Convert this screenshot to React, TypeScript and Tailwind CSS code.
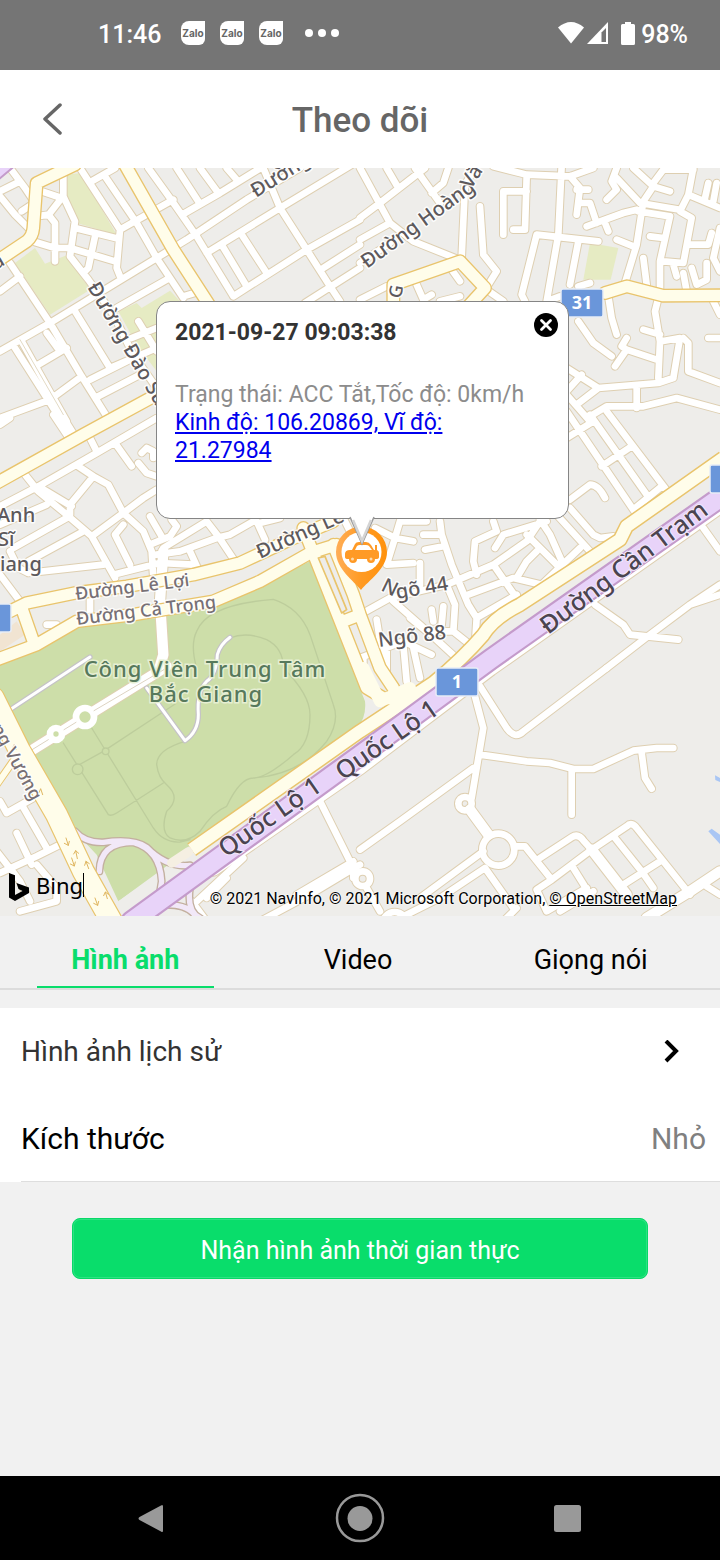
import React from "react";

type Tile = { x: number; y: number; roads: string };

/* Minor streets, one group of paths per section of the map. */
const streets: Tile[] = [
  {
    x: 0,
    y: 0,
    roads:
      "M240 0L360 185L350 300L362 330 M190 0V85L225 160L210 265L265 335L340 440L400 560L470 660 M110 65L185 90L150 135 M110 145L145 140L165 165V280 M105 222L165 240L210 240L345 280 M225 180L355 212 M285 205L265 300L250 315 M275 40L345 0 M315 25L410 165L470 270L550 390 M360 185L520 95 M445 0L510 90L590 205L700 385 M530 0L595 100 M600 0L655 75 M680 0L710 35 M550 138L660 75L790 -5 M0 550L150 465L470 270L560 215L740 95L900 0 M620 255L840 120L1080 -25 M790 0L840 120L920 245L990 355L1020 400 M700 385L920 245L1080 155 M970 300L1080 230 M915 405L1080 300 M665 230L740 355 M725 200L800 315 M550 385L600 370 M350 420L500 335 M225 430L330 600 M30 285L150 465L245 625L320 745 M0 370L60 325 M45 540L185 760 M65 520L160 690L200 760 M140 495L180 550 M200 540L115 590 M150 695L245 625 M270 635L400 570 M330 600L470 540 M295 685L430 615 M0 750L150 695 M415 460L470 550 M395 510L470 480 M0 85L45 140L85 180 M0 70L50 45 M30 0L75 60L95 90 M65 130L95 110",
  },
  {
    x: 1080,
    y: 0,
    roads:
      "M0 150L60 105L195 0 M0 215L90 165 M0 285L90 225 M0 0L90 165L160 220L285 270 M80 0L115 60 M165 0L240 105 M265 0L250 45L215 75 M345 0L315 50L305 270 M0 395L80 355 M170 350L190 395 M275 305L300 340 M380 365L430 400 M190 395L215 380 M240 400L300 385 M360 115L370 260L410 310L385 350 M430 200V70H500 M500 25L495 185H460 M400 -5L500 20L630 25L700 0 M605 -5L595 200 M715 220L530 200L485 380L495 400 M595 200L560 400L600 385 M655 220L630 350 M655 355L690 345 M630 25L660 60L650 140 M650 65H685 M655 105H690L710 165 M680 175L790 135L830 125 M735 165L745 190 M740 95L770 65L755 40L770 0 M770 30L840 105L960 125 M820 0L880 55L850 100L830 230L795 345 M880 55L930 70 M880 45L910 5H1000 M1000 0L985 80L960 130L995 150L970 285L910 280 M985 80L1080 120 M1045 45L1035 90 M1070 45L1060 100 M835 130L930 145L900 280V370 M870 205L910 210 M770 215L820 235 M990 230H1045L1055 195 M850 270L860 350 M940 290L950 325 M970 315L980 370 M995 300L1010 350L1040 335V285 M1080 180L1060 270L1080 310 M745 385L755 450L770 500 M655 460L700 525L755 565 M895 390L885 430L900 520L895 630 M905 520L960 510L940 630 M970 510L985 525V610L1080 645 M850 485L900 500 M800 510L785 535L800 545L890 575 M800 545L765 595 M1045 510H1080 M1060 400L1080 440 M620 600L715 660L895 645L940 630 M620 670L665 620 M715 660L650 710 M830 660V720 M620 680L690 760 M690 745L740 715L850 715L950 690L1080 725",
  },
  {
    x: 0,
    y: 750,
    roads:
      "M160 -10L210 65 M185 -10L225 55 M0 20L30 0 M265 50L290 100 M0 265L115 205L290 105L470 0 M75 170L115 220L200 290L275 355L345 480 M115 205L215 265 M235 145L280 175L210 260V290 M280 175L325 200L370 285L430 240L470 215 M345 75L395 145 M425 105L440 90L460 100V120 M415 135L440 165L470 175 M0 320L140 260 M40 390L200 300 M85 430L250 340 M275 355L370 285L430 340L455 400L460 480 M370 320L345 350L390 440 M85 465L310 440 M0 470L60 550 M30 400L55 450L85 465 M340 470L480 435L580 440 M450 295L485 355 M515 305L530 325L510 355L450 380 M470 410L540 400L650 360L690 350L760 310 M490 390L620 310L655 355L705 430 M570 400L595 455 M770 310L795 365 M780 315L840 300 M270 540V580 M140 620H170 M1030 300L1060 360",
  },
  {
    x: 1080,
    y: 750,
    roads:
      "M620 -20L830 290 M690 -10L860 230 M740 -20L930 230 M620 60L700 10 M725 145L815 85 M820 275L905 205 M630 245L690 200Q715 200 735 240 M630 270L700 350L720 360L760 355 M590 290L690 400 M540 305L570 350L610 440 M45 330L105 360L160 370 M105 360L80 440L160 435 M120 310L105 360 M120 310H200 M240 310L245 350H190 M245 350L275 440L325 560L350 600L345 680 M195 395L250 385 M180 435V500 M260 500L400 440L500 370L540 310 M400 310L410 340L345 370L340 430L350 470 M405 390L430 350L560 310 M500 350L590 440L620 460 M400 440L480 555 M325 530L460 480L545 500L660 390 M470 480L500 430L530 400 M350 600L470 530 M0 590L90 540L260 500L285 560L280 640 M100 550L180 620L300 730 M150 600L200 640L280 640L330 680 M250 565L245 620 M215 575L220 610 M50 605L70 730 M0 720L130 670L215 710 M80 670V770 M130 680L140 790 M160 690L180 780 M10 720V770 M1030 330L1080 400 M705 560L790 620L810 650L955 665 M740 750L870 650L990 560L1080 500 M990 560L1080 530",
  },
  {
    x: 0,
    y: 1500,
    roads:
      "M0 400L20 435L100 390 M65 410L140 540 M50 495L95 590 M-10 550L60 640L90 700 M0 615L110 565L180 530 M110 590L170 660V700L60 730 M30 600L60 640 M960 400L1060 600V630 M890 680L1060 580 M780 760L930 680L1080 590 M590 700L730 570 M575 700L620 760 M620 690L680 630",
  },
  {
    x: 1080,
    y: 1500,
    roads:
      "M360 55L440 180Q465 215 490 190L740 0 M345 85L370 180L335 390 M360 260L500 280L570 285L640 303H700L820 248L890 240H940 M635 310V440 M845 255L855 330L875 362 M0 545L120 460L340 300 M470 535H495L575 635 M540 570L635 508Q655 495 672 520L695 545L800 475Q815 460 830 480L990 680 M575 635L695 545 M765 510L845 610L880 660 M790 650L900 580 M640 600L690 680 M575 635L530 665L560 730L680 660 M600 730L700 670 M1040 655L1080 680 M180 690L370 550 M100 760L240 690L375 600L460 720 M20 660L60 730 M430 760L470 720",
  },
];

/* Wider white roads. */
const boulevards =
  "M490 1150L480 1300L490 1460L478 1500 M1410 1925L1465 2000 M1775 2045L1880 2180 M1940 2250L2070 2170L2160 2110 M90 1750L255 1647L500 1495";

const arterials =
  "M225 -10L110 45L100 180Q98 205 80 220L-10 280 M375 -10L520 245L640 430 M1180 400V350L1380 280L1455 360L1400 420 M1815 375L1880 355L1990 383L2170 382 M-10 945L250 800L470 680 M30 1330L80 1305L225 1275L380 1255L580 1220L720 1185L870 1115L1000 1060 M-10 1475L110 1430L230 1360L400 1340L640 1300L780 1240L930 1155L1010 1130 M65 1320L100 1420 M910 1080L1100 1560L1150 1590L1230 1600 M1000 1130L1060 1280L1080 1340L1140 1500L1180 1560 M1030 1360L1080 1340";

const parallelRoad =
  "M2170 870L1880 1075L1860 1115L1560 1310Q1480 1350 1450 1400Q1390 1470 1300 1545L1080 1690L575 2045";

const highway = "M2180 975L1470 1475L1080 1762L395 2260";
const serviceRoad = "M2170 1005L1470 1500L1080 1795L640 2100";
const avenue = "M-20 1590L60 1750L170 1940L250 2110L340 2270";

const trails =
  "M555 1720Q470 1745 470 1790Q475 1830 500 1850Q545 1890 500 1930Q480 1990 510 2010Q560 2030 600 1990Q640 1930 680 1915Q720 1830 760 1830Q900 1820 980 1720Q1020 1660 1000 1610L930 1400Q900 1320 820 1294Q620 1310 590 1390Q570 1430 590 1500 M690 1410Q740 1390 800 1415Q850 1440 850 1500Q930 1580 930 1640Q930 1730 880 1760Q800 1830 760 1830 M190 1725L325 1940Q335 1945 350 1935L490 1845 M275 1680L460 1980Q490 2025 540 2022L570 2015 M220 1800L310 1750L530 1605";

const parkLanes =
  "M15 1635L270 1467 M440 1560L555 1718Q595 1690 595 1640Q590 1570 620 1540Q650 1520 652 1460Q660 1430 690 1408";

const ramps =
  "M225 1990Q255 2025 310 2023Q400 2010 440 2038Q500 2100 570 2092 M298 2110Q300 2023 400 2023Q480 2045 485 2140L480 2170 M570 2160Q560 2230 600 2250 M500 2210Q570 2210 590 2250";

function Roundabouts() {
  return (
    <>
      <circle cx="1395" cy="1907" r="20" />
      <circle cx="1495" cy="2045" r="48" />
      <circle cx="1088" cy="2132" r="22" />
      <circle cx="1184" cy="2268" r="36" />
    </>
  );
}

function Shield({ x, y, w, children }: { x: number; y: number; w: number; children?: React.ReactNode }) {
  return (
    <g>
      <rect x={x} y={y} width={w} height={28} rx={2} fill="#6a96da" stroke="#e8edf6" strokeWidth={1.5} />
      {children ? (
        <text x={x + w / 2} y={y + 20} textAnchor="middle" fontSize={18} fontWeight={700} fill="#fff">
          {children}
        </text>
      ) : null}
    </g>
  );
}

function MapCanvas() {
  return (
    <svg viewBox="0 0 720 748" className="block h-full w-full" role="img" aria-label="Bản đồ Bắc Giang" fontFamily="'Noto Sans', sans-serif">
      <rect width="720" height="748" fill="#eeedea" />
      <g transform="scale(.33333)" fill="none" strokeLinecap="round" strokeLinejoin="round">
        <g fill="#e6ebc3">
          <path d="M200 20L242 15L350 200L230 165L200 95Z M45 285L105 240L135 287L200 262L270 365L150 440Z M355 430L410 405L425 420L510 368L540 400L470 610L410 530Z" />
          <path d="M1770 225L1855 240L1832 335L1750 335Z" />
        </g>
        <path d="M930 1180L1095 1600Q1100 1650 1070 1680L560 2040L505 2090L355 2200L290 2060L150 1910L-10 1640V1490L230 1370L480 1350L780 1250Z" fill="#cddea9" />
        <path d="M470 2120L355 2200L420 2244L500 2180Z" fill="#eeedea" />
        <path d="M0 1400L50 1360L75 1400L0 1450Z" fill="#f1e4d2" />
        <path d="M2125 1990L2135 1982L2160 2000V2028Z M2145 1822L2160 1830V1842L2146 1836Z" fill="#a9c6f4" />
        <g stroke="#bdcd9c" strokeWidth="4">
          <path d={trails} />
          <circle cx="233" cy="1804" r="16" fill="#cddea9" />
          <circle cx="317" cy="1750" r="10" fill="#cddea9" />
        </g>

        <g stroke="#decfb1" strokeWidth="26">
          {streets.map((t) => (
            <path key={`${t.x}-${t.y}`} d={t.roads} transform={`translate(${t.x} ${t.y})`} />
          ))}
          <path d={boulevards} strokeWidth="37" />
          <path d={serviceRoad} strokeWidth="52" />
          <Roundabouts />
        </g>
        <path d={parkLanes} stroke="#c5c2c7" strokeWidth="16" />
        <g stroke="#fff" strokeWidth="20">
          {streets.map((t) => (
            <path key={`${t.x}-${t.y}`} d={t.roads} transform={`translate(${t.x} ${t.y})`} />
          ))}
          <path d={boulevards} strokeWidth="31" />
          <path d={serviceRoad} strokeWidth="46" />
          <Roundabouts />
          <path d={parkLanes} strokeWidth="9" />
          <circle cx="168" cy="1698" r="18" fill="#cddea9" />
          <circle cx="255" cy="1647" r="27" fill="#cddea9" />
        </g>
        <path d="M85 1752L145 1715M192 1685L228 1663M282 1628L500 1500" stroke="#ddd3c2" strokeWidth="3" />
        <path d="M60 515L190 740" stroke="#e3dac4" strokeWidth="3" />

        <path d={ramps} stroke="#c3b09f" strokeWidth="24" />
        <path d={ramps} stroke="#f2e8f8" strokeWidth="16" />

        <path d="M-10 1850L60 1750" stroke="#e9c46c" strokeWidth="24" />
        <path d={avenue} stroke="#e9c46c" strokeWidth="70" />
        <path d={arterials} stroke="#e9c46c" strokeWidth="42" />
        <path d={parallelRoad} stroke="#e9c46c" strokeWidth="46" strokeLinecap="butt" />
        <path d="M-10 1850L60 1750" stroke="#fffdea" strokeWidth="18" />
        <path d={avenue} stroke="#fffdea" strokeWidth="63" />
        <path d={arterials} stroke="#fffdea" strokeWidth="34" />
        <path d={parallelRoad} stroke="#fffdea" strokeWidth="37" strokeLinecap="butt" />
        <path d="M1090 1500L1140 1600L1230 1560" stroke="#fffdea" strokeWidth="36" />
        <path d="M515 2085L565 2052" stroke="#f5efe2" strokeWidth="28" />
        <path d="M955 1170L1025 1335L1040 1325L975 1165Z" fill="#eeedea" stroke="#e9c46c" strokeWidth="5" />

        <path d={highway} stroke="#c49bcb" strokeWidth="68" />
        <path d={highway} stroke="#e8d3f9" strokeWidth="55" />
        <path d="M-20 20L40 -30" stroke="#c49bcb" strokeWidth="48" />
        <path d="M-20 20L40 -30" stroke="#e8d3f9" strokeWidth="36" />
        <path
          d="M198 2010l7 22l-12-6m12 6l3-12 M232 2072l-5-24l-6 10m6-10l9 8 M215 2070l8 24l-12-6m12 6l3-12 M266 2102l-8-22l-4 12m4-12l10 7 M285 2190l8 22l-12-6m12 6l3-12 M322 2192l-6-20l-5 11m5-11l9 7 M48 1745l-5-16l-5 10 M128 1880l-6-18l-5 12"
          stroke="#dfb65f"
          strokeWidth="3"
        />
      </g>

      <Shield x={561} y={121} w={42}>31</Shield>
      <Shield x={436} y={500} w={42}>1</Shield>
      <Shield x={710} y={297} w={42} />
      <Shield x={-31} y={436} w={42} />

      <g fill="#5d595c" stroke="#fff" strokeWidth="3" strokeLinejoin="round" paintOrder="stroke" strokeOpacity=".85" fontWeight="500">
        <g fontSize="20">
          <text transform="translate(256 30) rotate(-32)">Đường Lê</text>
          <text transform="translate(367 101) rotate(-36)">Đường Hoàng</text>
          <text transform="translate(471 22) rotate(-58)">Vă</text>
          <text transform="translate(87 119) rotate(60)">Đường Đào Sư</text>
          <text transform="translate(260 391) rotate(-24)">Đường Lê</text>
          <text transform="translate(401 131) rotate(-80)" fontSize="18">G</text>
          <text transform="translate(-4 102) rotate(-30)">a</text>
        </g>
        <g fontSize="18" fill="#777075">
          <text transform="translate(76 432) rotate(-7)">Đường Lê Lợi</text>
          <text transform="translate(77 457) rotate(-7)">Đường Cả Trọng</text>
          <text transform="translate(-9 560) rotate(61)">ng Vương</text>
        </g>
        <g fontSize="20">
          <text x="-3" y="354">Anh</text>
          <text x="-2" y="378">Sĩ</text>
          <text x="0" y="403">iang</text>
          <text transform="translate(380 422) rotate(26)">N</text>
          <text transform="translate(397 431) rotate(-10)">gõ 44</text>
          <text transform="translate(379 479) rotate(-7)">Ngõ 88</text>
        </g>
      </g>
      <g fontSize="22" fontWeight="500" fill="#57795c" stroke="#e6efd3" strokeWidth="3" paintOrder="stroke" textAnchor="middle">
        <text x="205" y="509" className="tracking-[1px]">Công Viên Trung Tâm</text>
        <text x="206" y="534" className="tracking-[1px]">Bắc Giang</text>
      </g>
      <g fontSize="25" fontWeight="500" fill="#4b4450" stroke="#f3e9fb" strokeWidth="2" paintOrder="stroke">
        <text transform="translate(548 467) rotate(-37)">Đường Cần Trạm</text>
        <text transform="translate(226 690) rotate(-35)">Quốc Lộ 1</text>
        <text transform="translate(343 613) rotate(-35)">Quốc Lộ 1</text>
      </g>
    </svg>
  );
}

function ZaloIcon() {
  return (
    <span className="flex h-6 w-6 items-center justify-center rounded-l-lg rounded-br-md bg-white font-['Inter',sans-serif] text-[10px] font-bold text-[#666]">
      Zalo
    </span>
  );
}

function StatusBar() {
  return (
    <div className="flex h-[70px] items-center justify-between bg-[#757575] pr-8 pl-[98px] text-[25px] leading-8 font-medium text-white">
      <div className="flex items-center">
        <span className="w-[83px]">11:46</span>
        <div className="mb-1 flex items-center gap-[15px]">
          <ZaloIcon />
          <ZaloIcon />
          <ZaloIcon />
        </div>
        <svg className="mb-1 ml-[21px]" width="36" height="10" viewBox="0 0 36 10" fill="#fff" aria-hidden="true">
          <circle cx="5" cy="5" r="4" />
          <circle cx="18" cy="5" r="4" />
          <circle cx="31" cy="5" r="4" />
        </svg>
      </div>
      <div className="flex items-center">
        <svg className="mb-1" width="84" height="24" viewBox="-1 0 84 24" aria-hidden="true">
          <path d="M0 6.500Q13 -4.500 26 6.500L13 22.500Z" fill="#fff" />
          <path d="M29 23L50 1V23Z" fill="#fff" />
          <path d="M43.500 11.500L48 7V21H43.500Z" fill="#757575" />
          <path d="M67 1h6v2h2.500q1.500 0 1.500 1.500v18q0 1.500-1.500 1.500h-11q-1.500 0-1.500-1.500v-18q0-1.500 1.500-1.500H67z" fill="#fff" />
        </svg>
        <span>98%</span>
      </div>
    </div>
  );
}

function DeviceCallout() {
  return (
    <div className="absolute top-[133px] left-[156px] w-[413px]">
      <div className="relative h-[218px] rounded-[14px] border border-[#858585] bg-white pt-[17px] pr-6 pl-[18px] text-[23px] leading-7 text-[#8c8c8c]">
        <p className="font-bold text-[#333]">2021-09-27 09:03:38</p>
        <p className="mt-[34px] whitespace-nowrap">Trạng thái: ACC Tắt,Tốc độ: 0km/h</p>
        <a href="#vi-tri" className="block text-[#0000ee] underline">
          Kinh độ: 106.20869, Vĩ độ: 21.27984
        </a>
        <button type="button" aria-label="Đóng" className="absolute top-[11px] right-[10px]">
          <svg width="24" height="24" viewBox="0 0 24 24">
            <circle cx="12" cy="12" r="12" fill="#000" />
            <path d="M7.500 7.500l9 9M16.500 7.500l-9 9" stroke="#fff" strokeWidth="2.800" strokeLinecap="round" />
          </svg>
        </button>
      </div>
      <svg className="absolute top-[214px] left-[178px]" width="56" height="78" viewBox="0 0 56 78" aria-hidden="true">
        <defs>
          <linearGradient id="pin">
            <stop offset="0" stopColor="#ffae58" />
            <stop offset=".5" stopColor="#ff9a22" />
            <stop offset="1" stopColor="#ff920d" />
          </linearGradient>
        </defs>
        <path d="M27 75C20 66 2 54 2 37A25.500 25.500 0 0 1 53 37C53 54 34 66 27 75Z" fill="url(#pin)" />
        <circle cx="27.500" cy="37" r="20" fill="#fff" />
        <path d="M11 39q0-4 5-4h2l3-6q1-2 4-2h7q3 0 5 3l3 5h1v-5h2v5q2 1 2 3v4q0 2-3 2h-1a4 4 0 0 1-8 0h-10a4 4 0 0 1-8 0h-1q-3 0-3-2z" fill="#ff9a26" />
        <path d="M21 35l2-4q1-1 3-1h6q2 0 3 1l3 4z" fill="#fff" />
        <circle cx="18.500" cy="44" r="1.500" fill="#ffd9a8" />
        <circle cx="37" cy="44" r="1.500" fill="#ffd9a8" />
        <path d="M16 2L28 29L40 2Z" fill="#fff" />
        <path d="M16 2L28 29L40 2" fill="none" stroke="#9a9a9a" strokeWidth="1.500" />
        <path d="M19 5L28 26L37 5" fill="none" stroke="#d4d4d4" strokeWidth="2.500" />
      </svg>
    </div>
  );
}

const tabs = ["Hình ảnh", "Video", "Giọng nói"];

export default function App() {
  const [active, setActive] = React.useState(0);
  return (
    <div className="flex min-h-screen flex-col bg-[#f1f1f1] font-['Roboto',sans-serif] text-black">
      <StatusBar />
      <header className="grid h-[98px] grid-cols-[1fr_auto_1fr] items-center bg-white px-10">
        <button type="button" aria-label="Quay lại" className="justify-self-start">
          <svg width="24" height="32" viewBox="0 0 24 32" fill="none" stroke="#666" strokeWidth="3.500">
            <path d="M20 2L5 16L20 30" strokeLinecap="round" strokeLinejoin="round" />
          </svg>
        </button>
        <h1 className="pt-1 text-[35px] leading-10 font-medium text-[#666]">Theo dõi</h1>
      </header>

      <section className="relative aspect-[720/748] w-full overflow-hidden">
        <MapCanvas />
        <DeviceCallout />
        <div className="absolute bottom-[14px] left-2 flex items-center">
          <svg width="22" height="30" viewBox="0 0 22 30" aria-hidden="true">
            <path d="M1 1L7 3.200V23L14.500 19L10.500 17L8.500 11L21 15.500V21L7 29L1 25.500Z" fill="#000" />
          </svg>
          <span className="mb-1 ml-1.5 border-r border-black font-['Noto_Sans',sans-serif] text-[22px] leading-6">Bing</span>
        </div>
        <p className="absolute right-[43px] bottom-[7px] text-base leading-5 whitespace-nowrap [text-shadow:0_0_2px_#fff,0_0_2px_#fff]">
          © 2021 NavInfo, © 2021 Microsoft Corporation,{" "}
          <a href="#osm" className="underline">
            © OpenStreetMap
          </a>
        </p>
      </section>

      <div role="tablist" className="grid h-[74px] grid-cols-3 border-b-2 border-[#dcdcdc] pr-[13px] pl-[9px] text-[27px]">
        {tabs.map((t, i) => (
          <button
            key={t}
            type="button"
            role="tab"
            aria-selected={i === active}
            onClick={() => setActive(i)}
            className={
              i === active
                ? "mx-7 border-b-2 border-[#09dd6b] pt-[17px] font-bold text-[#09dd6b]"
                : "mx-7 border-b-2 border-transparent pt-[17px]"
            }
          >
            <span className="block leading-9">{t}</span>
          </button>
        ))}
      </div>

      <div className="mt-[18px] bg-white">
        <button type="button" className="flex h-[87px] w-full items-center justify-between pr-10 pl-[21px] text-[28px] text-[#333]">
          <span>Hình ảnh lịch sử</span>
          <svg width="18" height="24" viewBox="0 0 18 24" fill="none" stroke="#000" strokeWidth="4">
            <path d="M4 1L14 11L4 21" />
          </svg>
        </button>
        <div className="pl-[21px]">
          <button type="button" className="flex h-[87px] w-full items-center justify-between border-b border-[#dedede] pr-[14px] text-[30px]">
            <span>Kích thước</span>
            <span className="text-[#808080]">Nhỏ</span>
          </button>
        </div>
      </div>

      <div className="px-[72px] pt-9">
        <button type="button" className="h-[61px] w-full rounded-lg border border-[#09d868] bg-[#09dd6b] pt-1 text-[25px] text-white shadow-[inset_0_0_0_1px_#2be381]">
          Nhận hình ảnh thời gian thực
        </button>
      </div>

      <nav className="mt-auto flex h-[84px] items-center justify-between bg-black px-[126px]" aria-label="Điều hướng">
        <button type="button" aria-label="Trở về">
          <svg width="50" height="50" viewBox="0 0 50 50" fill="#999">
            <path d="M35 12.500Q37 11 37 13.500V37.500Q37 40 35 38.500L13.500 27Q11.500 25.500 13.500 24Z" />
          </svg>
        </button>
        <button type="button" aria-label="Màn hình chính">
          <svg width="50" height="50" viewBox="0 0 50 50">
            <circle cx="25" cy="25" r="23" fill="none" stroke="#999" strokeWidth="2.500" />
            <circle cx="25" cy="25.500" r="12.500" fill="#999" />
          </svg>
        </button>
        <button type="button" aria-label="Ứng dụng gần đây">
          <svg width="50" height="50" viewBox="0 0 50 50" fill="#999">
            <rect x="10" y="12" width="27" height="27" rx="2.500" />
          </svg>
        </button>
      </nav>
    </div>
  );
}
